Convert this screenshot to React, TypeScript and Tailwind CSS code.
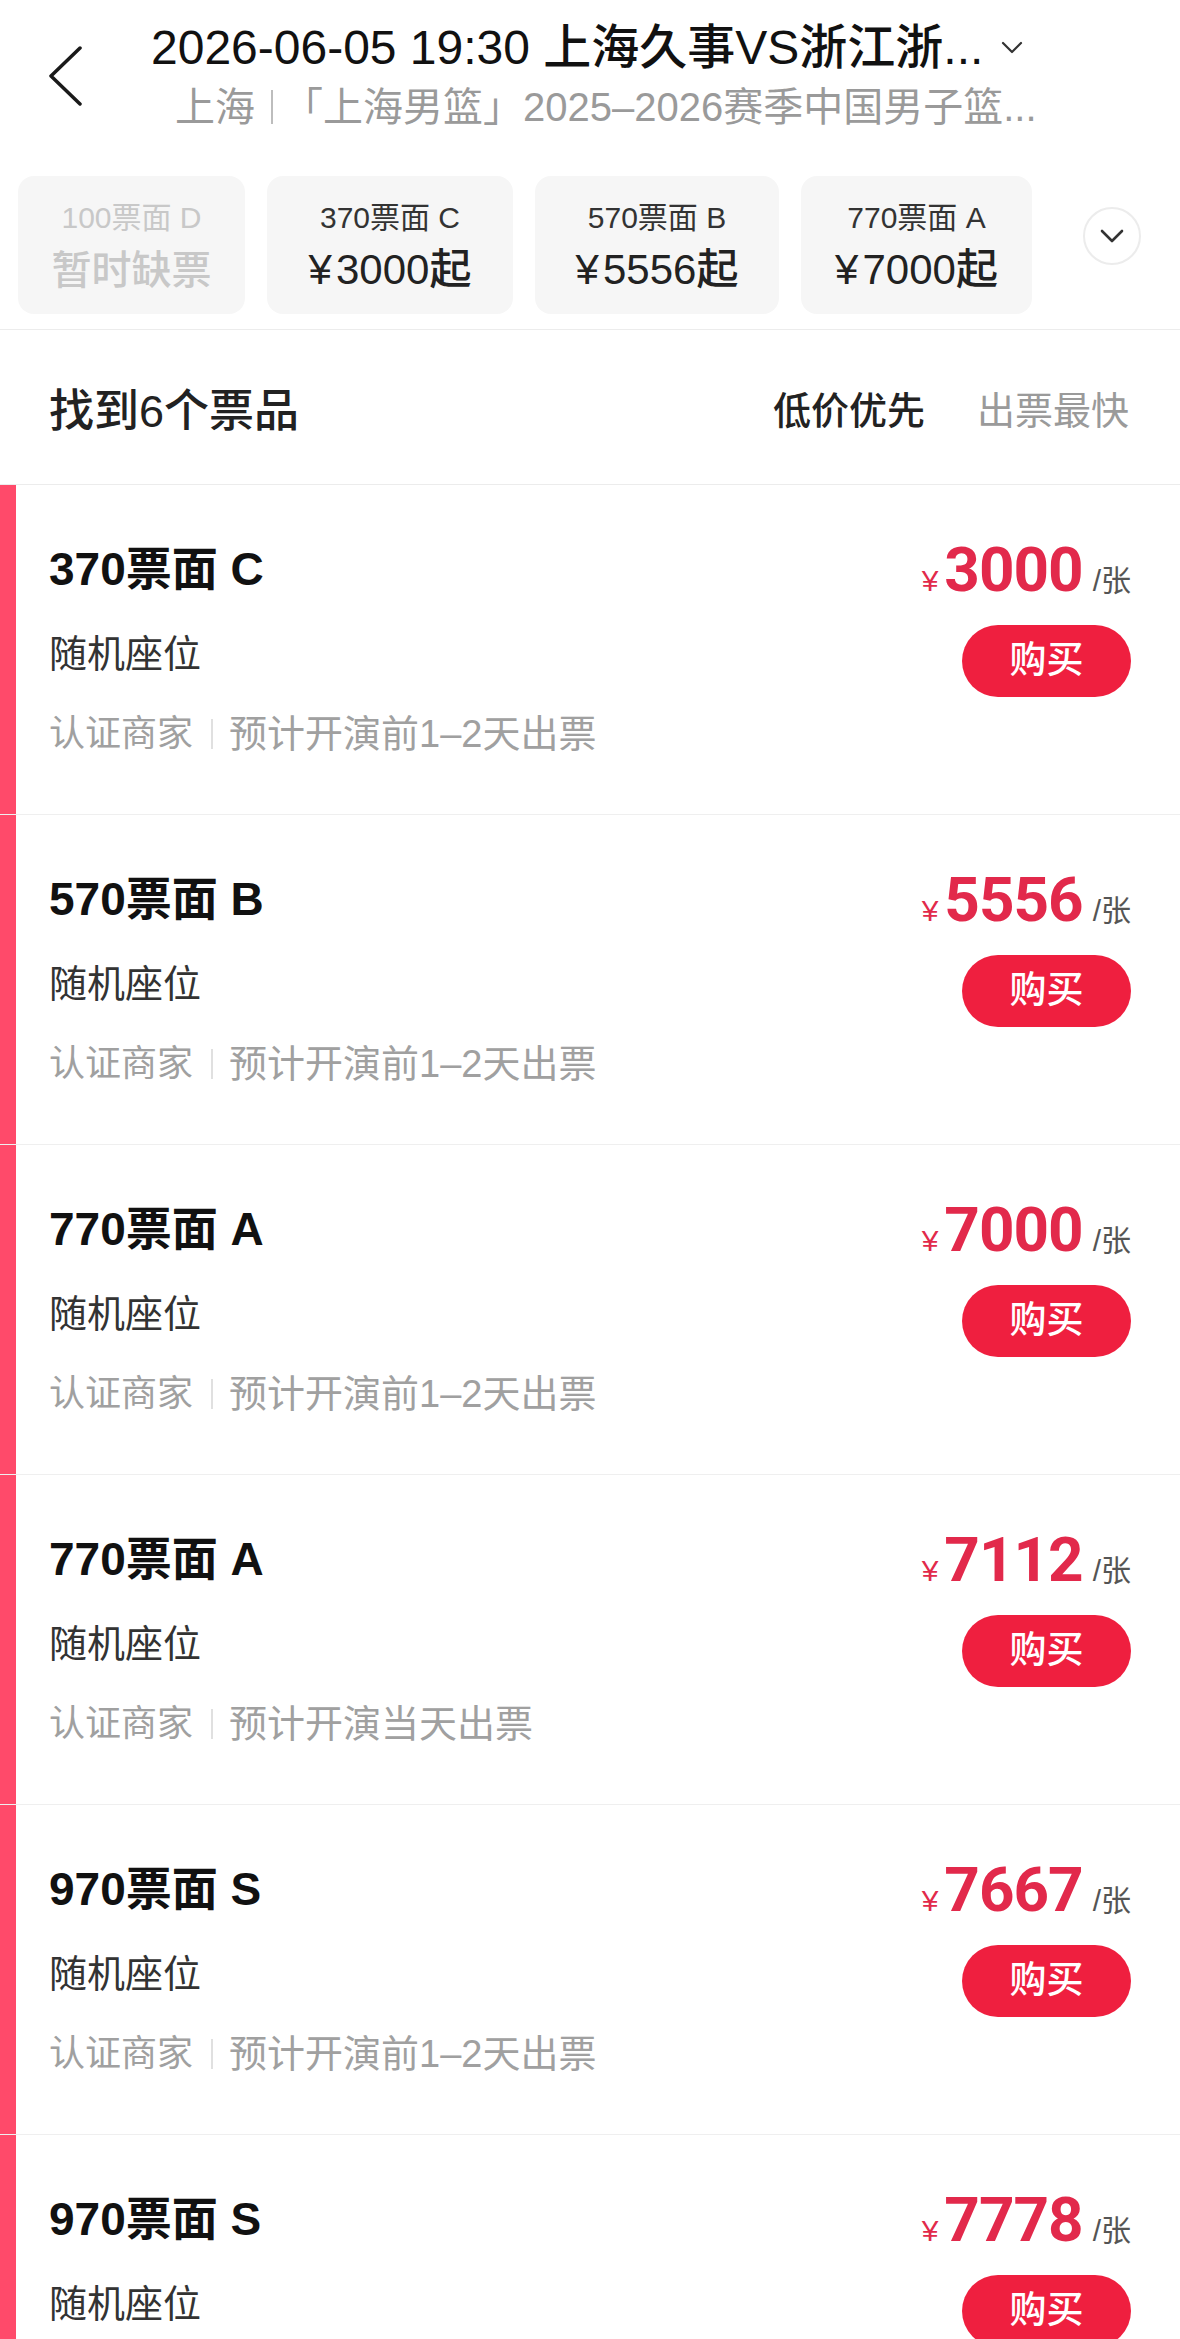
import React from "react";

const tiers = [
  { top: "100票面 D", bottom: "暂时缺票", disabled: true, w: "w-[227px]" },
  { top: "370票面 C", bottom: "3000", disabled: false, w: "w-[246px]" },
  { top: "570票面 B", bottom: "5556", disabled: false, w: "w-[244px]" },
  { top: "770票面 A", bottom: "7000", disabled: false, w: "w-[231px]" },
];

const items = [
  { name: "370票面 C", price: "3000", meta: "预计开演前1–2天出票" },
  { name: "570票面 B", price: "5556", meta: "预计开演前1–2天出票" },
  { name: "770票面 A", price: "7000", meta: "预计开演前1–2天出票" },
  { name: "770票面 A", price: "7112", meta: "预计开演当天出票" },
  { name: "970票面 S", price: "7667", meta: "预计开演前1–2天出票" },
  { name: "970票面 S", price: "7778", meta: "预计开演前1–2天出票" },
];

function Header() {
  return (
    <div className="flex items-start pt-[20px]">
      <div className="w-[151px] shrink-0 pl-[49px] pt-[26px]">
        <svg width="34" height="60" viewBox="0 0 34 60" fill="none">
          <polyline points="31,2 2,30 31,58" stroke="#1a1a1a" strokeWidth="3.5" strokeLinecap="round" strokeLinejoin="round" />
        </svg>
      </div>
      <div className="flex flex-col">
        <div className="flex items-center h-[56px]">
          <span className="text-[48px] leading-[56px] font-medium text-[#111] whitespace-nowrap">
            2026-06-05 19:30 上海久事VS浙江浙...
          </span>
          <svg className="ml-[18px]" width="22" height="14" viewBox="0 0 22 14" fill="none">
            <polyline points="2,2 11,11 20,2" stroke="#333" strokeWidth="2.2" strokeLinecap="round" strokeLinejoin="round" />
          </svg>
        </div>
        <div className="mt-[7px] pl-[24px] h-[48px] flex items-center text-[40px] leading-[48px] text-[#9a9a9a] whitespace-nowrap">
          <span>上海</span>
          <span className="ml-[16px] mr-[10px] inline-block w-[2px] h-[34px] bg-[#bdbdbd]"></span>
          <span>「上海男篮」2025–2026赛季中国男子篮...</span>
        </div>
      </div>
    </div>
  );
}

function Tiers() {
  return (
    <div className="mt-[45px] flex items-start pl-[18px] pr-[39px] pb-[15px] border-b border-[#ececec]">
      <div className="flex gap-[22px]">
        {tiers.map((t, i) => (
          <div
            key={i}
            className={`${t.w} h-[138px] rounded-[16px] bg-[#f6f6f6] flex flex-col items-center pt-[22px]`}
          >
            <div className={`text-[30px] leading-[40px] whitespace-nowrap ${t.disabled ? "text-[#c8c8c8]" : "text-[#333]"}`}>
              {t.top}
            </div>
            {t.disabled ? (
              <div className="mt-[7px] text-[40px] leading-[50px] text-[#c8c8c8] font-medium whitespace-nowrap">
                {t.bottom}
              </div>
            ) : (
              <div className="mt-[7px] text-[42px] leading-[50px] text-[#222] font-medium whitespace-nowrap">
                <span className="mr-[4px]">¥</span>
                {t.bottom}起
              </div>
            )}
          </div>
        ))}
      </div>
      <div className="ml-auto mt-[31px] w-[58px] h-[58px] rounded-full border-2 border-[#ececec] bg-white flex items-center justify-center">
        <svg width="26" height="16" viewBox="0 0 26 16" fill="none">
          <polyline points="3,3 13,13 23,3" stroke="#333" strokeWidth="2.6" strokeLinecap="round" strokeLinejoin="round" />
        </svg>
      </div>
    </div>
  );
}

function ListHeader() {
  return (
    <div className="h-[155px] pt-[9px] flex items-center justify-between pl-[49px] pr-[51px] border-b border-[#ececec]">
      <div className="text-[45px] font-medium text-[#222]">找到6个票品</div>
      <div className="flex items-center gap-[52px] text-[38px]">
        <span className="font-medium text-[#222]">低价优先</span>
        <span className="text-[#9a9a9a]">出票最快</span>
      </div>
    </div>
  );
}

function Card({ name, price, meta }: { name: string; price: string; meta: string }) {
  return (
    <div className="flex h-[330px] border-b border-[#efefef] shrink-0">
      <div className="w-[16px] shrink-0 bg-[#ff4a6a]"></div>
      <div className="flex-1 flex justify-between pl-[33px] pr-[49px]">
        <div className="flex flex-col">
          <div className="mt-[56px] text-[46px] leading-[56px] font-bold text-[#111] whitespace-nowrap">{name}</div>
          <div className="mt-[33px] text-[38px] leading-[48px] text-[#333]">随机座位</div>
          <div className="mt-[34px] h-[44px] flex items-center leading-[44px] text-[#a0a0a0] whitespace-nowrap">
            <span className="text-[36px]">认证商家</span>
            <span className="ml-[18px] mr-[16px] inline-block w-[2px] h-[30px] bg-[#e0e0e0]"></span>
            <span className="text-[38px]">{meta}</span>
          </div>
        </div>
        <div className="flex flex-col items-end">
          <div className="mt-[50px] h-[70px] flex items-baseline">
            <span className="text-[30px] leading-[70px] font-medium text-[#e2294b] mr-[6px]">¥</span>
            <span className="font-['Roboto',sans-serif] text-[62px] leading-[70px] font-bold text-[#e2294b] tracking-[-1px]">
              {price}
            </span>
            <span className="ml-[10px] text-[30px] leading-[70px] text-[#555]">/张</span>
          </div>
          <div className="mt-[20px] w-[169px] h-[72px] rounded-full bg-[#ef1f3f] flex items-center justify-center text-[37px] font-medium text-white">
            购买
          </div>
        </div>
      </div>
    </div>
  );
}

export default function App() {
  return (
    <div className="w-[1180px] h-[2339px] overflow-hidden bg-white font-['Liberation_Sans','Noto_Sans_CJK_SC',sans-serif]">
      <Header />
      <Tiers />
      <ListHeader />
      <div className="flex flex-col">
        {items.map((it, i) => (
          <Card key={i} {...it} />
        ))}
      </div>
    </div>
  );
}
